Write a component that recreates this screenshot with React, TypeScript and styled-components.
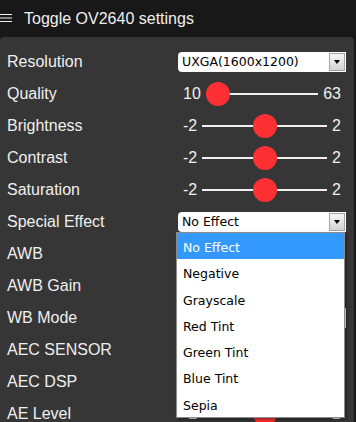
import React from "react";
import styled, { createGlobalStyle } from "styled-components";

const GlobalStyle = createGlobalStyle`
  html, body {
    margin: 0;
    padding: 0;
  }
  body {
    background: #181818;
    color: #efefef;
    font-family: "Liberation Sans", Arial, Helvetica, sans-serif;
    font-size: 16px;
    overflow: hidden;
  }
`;

const Page = styled.div`
  width: 356px;
  height: 422px;
  overflow: hidden;
`;

const Header = styled.div`
  display: flex;
  align-items: center;
  gap: 12px;
  height: 37px;
  color: #efefef;
`;

const Menu = styled.nav`
  width: 354px;
  box-sizing: border-box;
  background: #363636;
  border-radius: 4px;
  padding: 14px 8px 8px 7px;
  display: flex;
  flex-direction: column;
  gap: 10px;
`;

const InputGroup = styled.div`
  display: flex;
  flex-wrap: nowrap;
  height: 22px;
  line-height: 22px;
`;

const Label = styled.label`
  flex-shrink: 0;
  width: 171px;
  white-space: nowrap;
`;

const Control = styled.div`
  flex: 1;
  display: flex;
  align-items: center;
  min-width: 0;
`;

const RangeEnd = styled.span`
  padding: 0 5px;
`;

const Range = styled.input.attrs({ type: "range" })`
  -webkit-appearance: none;
  appearance: none;
  flex: 1;
  min-width: 0;
  width: 100%;
  height: 22px;
  margin: 0;
  background: transparent;

  &::-webkit-slider-runnable-track {
    height: 2px;
    background: #efefef;
    border: 0;
  }
  &::-webkit-slider-thumb {
    -webkit-appearance: none;
    width: 24px;
    height: 24px;
    border: 0;
    border-radius: 50%;
    background: #ff3034;
    margin-top: -11px;
  }
`;

const Select = styled.div`
  position: relative;
  flex: 1;
  height: 20px;
  box-sizing: border-box;
  display: flex;
  align-items: center;
  background: #fff;
  border-radius: 4px 0 0 4px;
  padding-left: 4px;
  font-family: "DejaVu Sans", Tahoma, Verdana, sans-serif;
  font-size: 12.5px;
  line-height: 14px;
  color: #000;
`;

const SelectValue = styled.span`
  flex: 1;
  white-space: nowrap;
`;

const ArrowButton = styled.span`
  width: 16px;
  height: 18px;
  margin-right: 1px;
  box-sizing: border-box;
  border: 1px solid #a3a3a3;
  background: linear-gradient(#f6f6f6, #d2d2d2);
  display: flex;
  align-items: center;
  justify-content: center;

  &::after {
    content: "";
    border-left: 3.5px solid transparent;
    border-right: 3.5px solid transparent;
    border-top: 4px solid #000;
  }
`;

const List = styled.ul`
  position: absolute;
  top: 100%;
  left: -2px;
  width: 169px;
  margin: 0;
  padding: 0;
  list-style: none;
  box-sizing: border-box;
  background: #fff;
  border: 1px solid #8c8c8c;
  box-shadow: 2px 2px 3px rgba(0, 0, 0, 0.35);
  z-index: 5;
`;

const Option = styled.li<{ $active?: boolean }>`
  height: 26.3px;
  line-height: 29px;
  padding-left: 6px;
  white-space: nowrap;
  background: ${(p) => (p.$active ? "#3399ff" : "transparent")};
  color: ${(p) => (p.$active ? "#fff" : "#000")};
`;

const Switch = styled.span<{ $on?: boolean }>`
  display: flex;
  align-items: center;
  justify-content: ${(p) => (p.$on ? "flex-end" : "flex-start")};
  width: 50px;
  height: 22px;
  padding: 0 4px;
  box-sizing: border-box;
  border-radius: 22px;
  background: ${(p) => (p.$on ? "#ff3034" : "grey")};

  &::before {
    content: "";
    width: 16px;
    height: 16px;
    border-radius: 50%;
    background: #fff;
  }
`;

const effects = [
  "No Effect",
  "Negative",
  "Grayscale",
  "Red Tint",
  "Green Tint",
  "Blue Tint",
  "Sepia",
];

function Slider({ min, max, value }: { min: number; max: number; value: number }) {
  return (
    <Control>
      <RangeEnd>{min}</RangeEnd>
      <Range min={min} max={max} defaultValue={value} />
      <RangeEnd>{max}</RangeEnd>
    </Control>
  );
}

function Hamburger() {
  return (
    <svg width="12" height="9" viewBox="0 0 12 9">
      <g stroke="#efefef" strokeWidth="1">
        <line x1="0" y1="0.5" x2="12" y2="0.5" />
        <line x1="0" y1="4" x2="12" y2="4" />
        <line x1="0" y1="7.5" x2="12" y2="7.5" />
      </g>
    </svg>
  );
}

export default function App() {
  return (
    <Page>
      <GlobalStyle />
      <Header>
        <Hamburger />
        <span>Toggle OV2640 settings</span>
      </Header>
      <Menu>
        <InputGroup>
          <Label>Resolution</Label>
          <Control>
            <Select>
              <SelectValue>UXGA(1600x1200)</SelectValue>
              <ArrowButton />
            </Select>
          </Control>
        </InputGroup>
        <InputGroup>
          <Label>Quality</Label>
          <Slider min={10} max={63} value={10} />
        </InputGroup>
        <InputGroup>
          <Label>Brightness</Label>
          <Slider min={-2} max={2} value={0} />
        </InputGroup>
        <InputGroup>
          <Label>Contrast</Label>
          <Slider min={-2} max={2} value={0} />
        </InputGroup>
        <InputGroup>
          <Label>Saturation</Label>
          <Slider min={-2} max={2} value={0} />
        </InputGroup>
        <InputGroup>
          <Label>Special Effect</Label>
          <Control>
            <Select>
              <SelectValue>No Effect</SelectValue>
              <ArrowButton />
              <List>
                {effects.map((e, i) => (
                  <Option key={e} $active={i === 0}>
                    {e}
                  </Option>
                ))}
              </List>
            </Select>
          </Control>
        </InputGroup>
        <InputGroup>
          <Label>AWB</Label>
          <Control>
            <Switch $on />
          </Control>
        </InputGroup>
        <InputGroup>
          <Label>AWB Gain</Label>
          <Control>
            <Switch $on />
          </Control>
        </InputGroup>
        <InputGroup>
          <Label>WB Mode</Label>
          <Control>
            <Select>
              <SelectValue>Auto</SelectValue>
              <ArrowButton />
            </Select>
          </Control>
        </InputGroup>
        <InputGroup>
          <Label>AEC SENSOR</Label>
          <Control>
            <Switch $on />
          </Control>
        </InputGroup>
        <InputGroup>
          <Label>AEC DSP</Label>
          <Control>
            <Switch />
          </Control>
        </InputGroup>
        <InputGroup>
          <Label>AE Level</Label>
          <Slider min={-2} max={2} value={0} />
        </InputGroup>
      </Menu>
    </Page>
  );
}
